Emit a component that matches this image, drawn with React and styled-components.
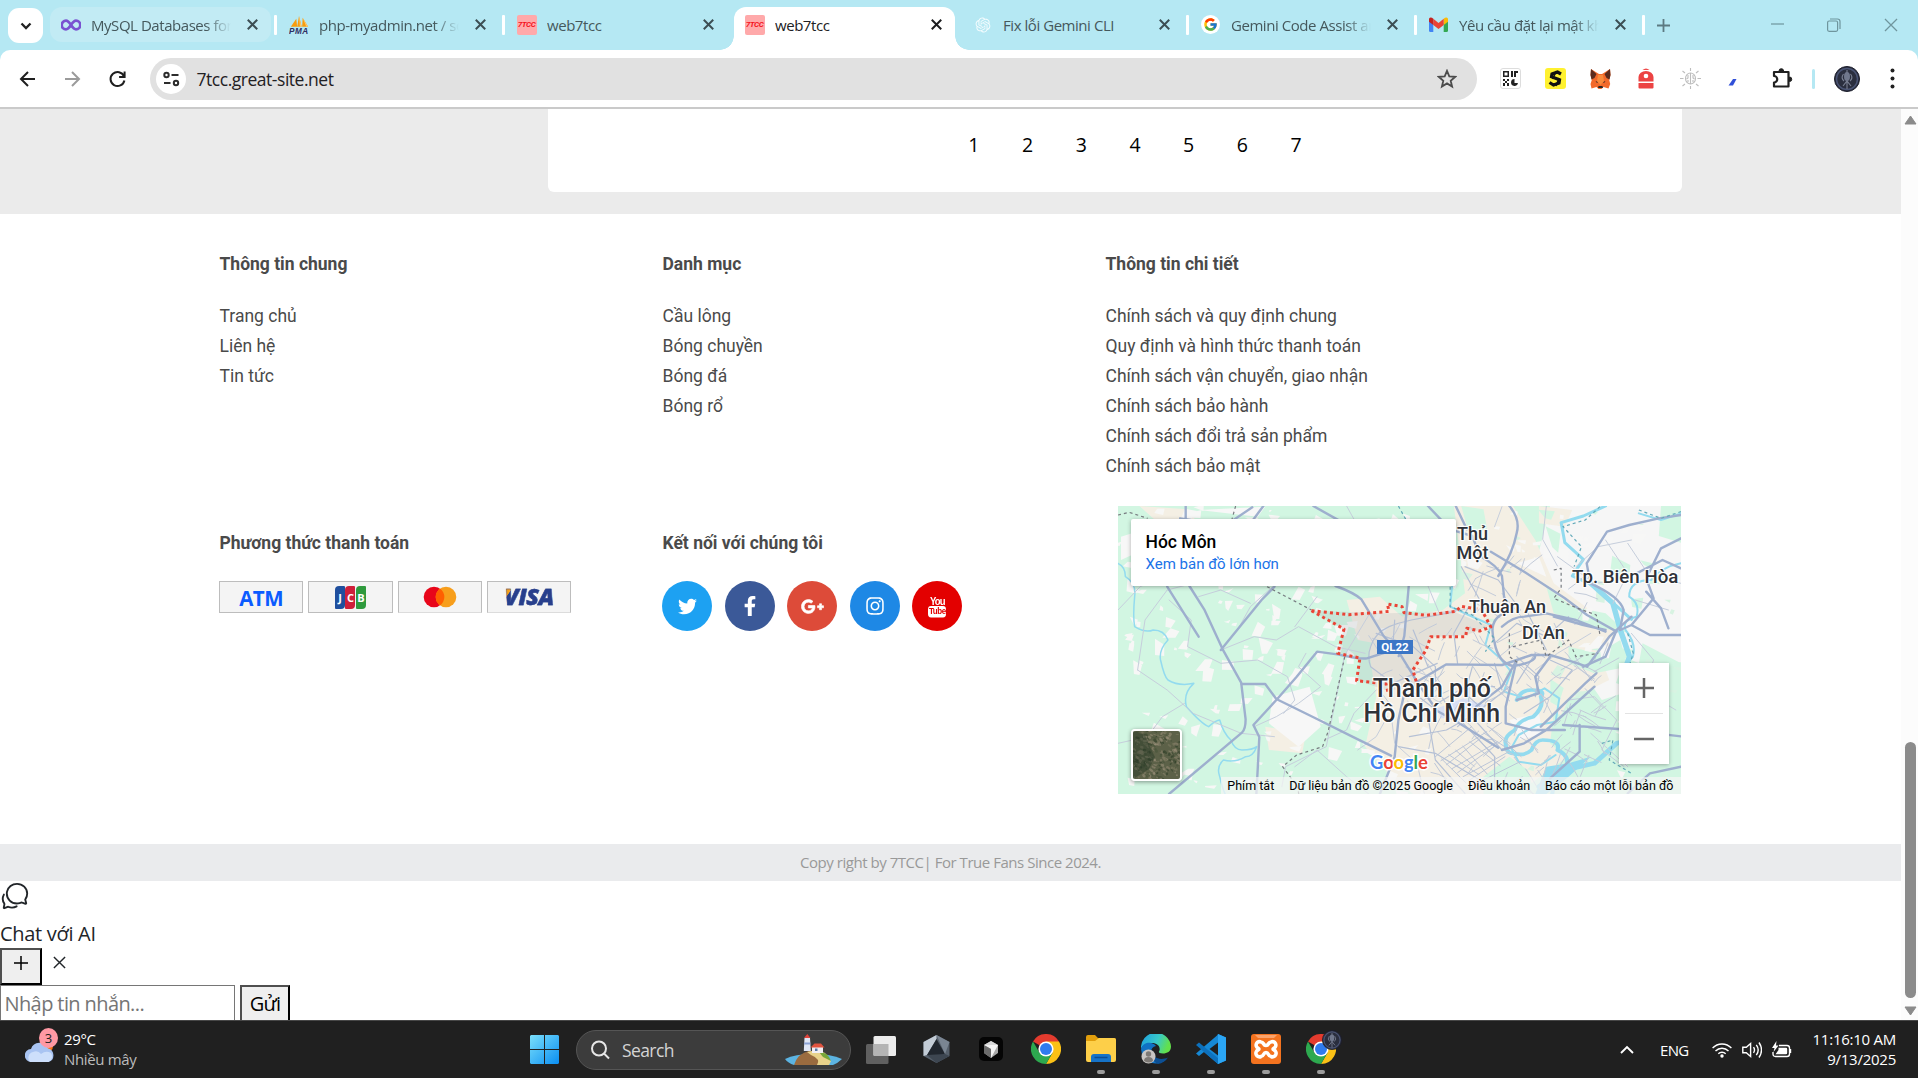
import React from 'react';
import styled, { createGlobalStyle } from 'styled-components';
import { FaTwitter, FaFacebookF, FaGooglePlusG, FaInstagram } from 'react-icons/fa';
import { FcGoogle } from 'react-icons/fc';
import { RiOpenaiFill } from 'react-icons/ri';
import { IoChatbubblesOutline } from 'react-icons/io5';

const ui = '"Segoe UI", "Open Sans", "Noto Sans", sans-serif';
const rb = 'Roboto, "Noto Sans", sans-serif';

const Global = createGlobalStyle`
  *, *::before, *::after { box-sizing: border-box; }
  html, body { margin: 0; padding: 0; }
  body { width: 1918px; height: 1078px; overflow: hidden; background: #fff; font-family: ${ui}; color: #212529; }
  svg { display: block; flex: none; }
`;

const Screen = styled.div`
  width: 1918px;
  height: 1078px;
  display: flex;
  flex-direction: column;
  overflow: hidden;
`;

/* ---------- browser tabs ---------- */
const TabStrip = styled.div`
  height: 50px;
  flex: none;
  background: #b5e8f3;
  display: flex;
  align-items: flex-start;
  padding: 7px 0 0 8px;
`;
const TabSearch = styled.div`
  width: 35px;
  height: 35px;
  margin: 1px 7px 0 0;
  border-radius: 11px;
  background: #fff;
  display: grid;
  place-items: center;
`;
const Tab = styled.div`
  position: relative;
  width: 221px;
  margin-right: 7px;
  height: ${(p) => (p.$active ? 43 : 35)}px;
  padding: 0 13.5px 0 10.5px;
  border-radius: ${(p) => (p.$active ? '12px 12px 0 0' : '12px')};
  background: ${(p) => (p.$active ? '#fff' : p.$hover ? '#c2ebf4' : 'transparent')};
  display: flex;
  align-items: flex-start;
  flex: none;
  &::before, &::after {
    content: ${(p) => (p.$active ? '""' : 'none')};
    position: absolute;
    bottom: 0;
    width: 14px;
    height: 14px;
  }
  &::before { left: -14px; background: radial-gradient(circle at 0 0, transparent 13.5px, #fff 14px); }
  &::after { right: -14px; background: radial-gradient(circle at 100% 0, transparent 13.5px, #fff 14px); }
`;
const TabIcon = styled.div`
  width: 20px;
  height: 35px;
  display: grid;
  place-items: center;
  flex: none;
`;
const TabTitle = styled.div`
  width: 140px;
  margin-left: 10.5px;
  height: 35px;
  line-height: 36px;
  font-size: 15px;
  letter-spacing: -0.45px;
  white-space: nowrap;
  overflow: hidden;
  color: ${(p) => (p.$active ? '#202124' : '#45585c')};
  ${(p) => p.$fade && '-webkit-mask-image: linear-gradient(90deg, #000 82%, transparent 100%);'}
`;
const TabClose = styled.div`
  height: 35px;
  margin-left: auto;
  display: grid;
  place-items: center;
  color: ${(p) => (p.$active ? '#1b1c1e' : '#3c4e53')};
`;
const TabDivider = styled.i`
  position: absolute;
  right: -6px;
  top: 7.5px;
  width: 3px;
  height: 20px;
  border-radius: 1px;
  background: #fff;
`;
const SiteBadge = styled.div`
  width: 20px;
  height: 20px;
  border-radius: 2px;
  background: #ffa9aa;
  color: #f5121c;
  font: italic 700 8px/20px Roboto, sans-serif;
  letter-spacing: -0.4px;
  text-align: center;
`;
const GoogleDot = styled.div`
  width: 19px;
  height: 19px;
  border-radius: 50%;
  background: #fff;
  display: grid;
  place-items: center;
`;
const NewTab = styled.div`
  height: 36px;
  margin-left: 11px;
  display: grid;
  place-items: center;
`;
const WindowButtons = styled.div`
  margin-left: auto;
  height: 35px;
  padding-right: 20px;
  display: flex;
  align-items: center;
  gap: 43px;
  color: #6f959d;
`;

/* ---------- toolbar ---------- */
const ToolbarBack = styled.div`
  height: 59px;
  flex: none;
  background: #b5e8f3;
`;
const Toolbar = styled.div`
  height: 59px;
  background: #fff;
  border-bottom: 2px solid #cacaca;
  border-radius: 10px 10px 0 0;
  display: flex;
  align-items: center;
  padding: 0 4px 0 17px;
`;
const NavButtons = styled.div`
  width: 133px;
  flex: none;
  display: flex;
  gap: 24px;
`;
const AddressBar = styled.div`
  width: 1327px;
  height: 42px;
  flex: none;
  border-radius: 21px;
  background: #e1e1e1;
  display: flex;
  align-items: center;
  padding: 0 20px 0 6px;
`;
const SiteInfo = styled.div`
  width: 30px;
  height: 30px;
  border-radius: 50%;
  background: #fff;
  display: grid;
  place-items: center;
  margin-right: 10.5px;
`;
const Url = styled.div`
  flex: 1;
  font-size: 17.5px;
  letter-spacing: -0.47px;
  color: #1f2023;
`;
const Extensions = styled.div`
  margin-left: 22px;
  display: flex;
  align-items: center;
  flex: 1;
`;
const ExtSlot = styled.div`
  width: ${(p) => p.$w || 45}px;
  height: 26px;
  flex: none;
  display: grid;
  place-items: center;
`;
const QrTile = styled.div`
  width: 21px;
  height: 21px;
  border: 1px solid #ddd;
  border-radius: 3px;
  background: #fff;
  display: grid;
  place-items: center;
`;
const YellowTile = styled.div`
  width: 21px;
  height: 21px;
  border-radius: 3px;
  background: #fff130;
  display: grid;
  place-items: center;
`;
const ToolbarRule = styled.i`
  width: 3px;
  height: 20px;
  border-radius: 2px;
  background: #b5e8f3;
`;

/* ---------- page ---------- */
const Viewport = styled.div`
  height: 911px;
  flex: none;
  display: flex;
`;
const Page = styled.div`
  width: 1901px;
  display: flex;
  flex-direction: column;
`;
const ProductBand = styled.div`
  height: 105px;
  flex: none;
  background: #ebebeb;
  padding: 0 219px 22px 548px;
`;
const Pagination = styled.div`
  height: 83px;
  background: #fff;
  border-radius: 0 0 6px 6px;
  display: flex;
  justify-content: center;
  padding: 20px 0 0 40px;
`;
const PageNumber = styled.a`
  width: 53.7px;
  height: 32px;
  line-height: 32px;
  text-align: center;
  font-size: 19.5px;
  color: #000;
`;
const Footer = styled.footer`
  height: 630px;
  flex: none;
  padding: 35px 0 0 219.5px;
  display: grid;
  grid-template-columns: 443px 443px 580px;
  grid-template-rows: 257px 1fr;
  font-family: ${rb};
  color: #444;
`;
const Column = styled.div`
  padding-top: ${(p) => p.$top || 0}px;
`;
const Heading = styled.h3`
  margin: 0;
  height: 28px;
  line-height: 28px;
  font-size: 17.5px;
  font-weight: 700;
  color: #4a4a4a;
`;
const LinkList = styled.ul`
  list-style: none;
  margin: 23px 0 0;
  padding: 0;
`;
const LinkItem = styled.li`
  height: 30px;
  line-height: 31px;
  font-size: 17.5px;
  color: #4a4a4a;
  white-space: nowrap;
`;
const Payments = styled.div`
  display: flex;
  gap: 5.2px;
  margin: 24px 0 0 -0.5px;
`;
const PayCard = styled.div`
  width: 84.2px;
  height: 32px;
  border: 1px solid #bdbdbd;
  border-bottom-color: ${(p) => (p.$soft ? '#dcdcdc' : '#bdbdbd')};
  background: #f4f4f4;
  display: grid;
  place-items: center;
`;
const AtmWord = styled.span`
  font: 700 20.5px/30px "Open Sans", sans-serif;
  letter-spacing: -0.6px;
  color: #0b5bff;
  padding-top: 1px;
`;
const JcbBars = styled.div`
  display: flex;
  gap: 0.5px;
`;
const JcbBar = styled.span`
  width: 10px;
  height: 23px;
  border-radius: 4px 1px 4px 1px;
  background: ${(p) => p.$c};
  color: #fff;
  font: 700 11px/23px "Open Sans", sans-serif;
  text-align: center;
`;
const VisaWord = styled.span`
  font: italic 800 23px/30px "Open Sans", sans-serif;
  letter-spacing: -0.3px;
  color: transparent;
  background: linear-gradient(125deg, #f7a01d 19%, #273f8c 20%);
  -webkit-background-clip: text;
  background-clip: text;
  -webkit-text-stroke: 0.4px #273f8c;
  padding: 0 2px;
  margin-top: -2px;
`;
const Socials = styled.div`
  display: flex;
  gap: 12.6px;
  margin: 24px 0 0 -0.5px;
`;
const SocialLink = styled.a`
  width: 50px;
  height: 50px;
  border-radius: 50%;
  background: ${(p) => p.$c};
  color: #fff;
  display: grid;
  place-items: center;
`;
const YouTube = styled.span`
  display: flex;
  flex-direction: column;
  align-items: center;
  font: 700 9.5px/9px "Liberation Sans Narrow", "Liberation Sans", sans-serif;
  letter-spacing: -0.8px;
  transform: scaleY(1.15);
`;
const Tube = styled.b`
  width: 18px;
  height: 10px;
  line-height: 10px;
  font-size: 8px;
  letter-spacing: -0.4px;
  background: #fff;
  color: #e30000;
  border-radius: 3px;
  text-align: center;
`;

/* ---------- map ---------- */
const MapFrame = styled.div`
  position: relative;
  width: 563px;
  height: 288px;
  margin-left: 12.5px;
  overflow: hidden;
  background: #d2f5e1;
`;
const PlaceLabel = styled.span`
  position: absolute;
  left: ${(p) => p.$x}px;
  top: ${(p) => p.$y}px;
  font-size: ${(p) => p.$size || 18}px;
  line-height: ${(p) => p.$lh || 19}px;
  font-weight: 500;
  color: #2f3238;
  text-align: center;
  white-space: nowrap;
  text-shadow: 0 0 2px #fff, 1px 1px 1px #fff, -1px -1px 1px #fff, 1px -1px 1px #fff, -1px 1px 1px #fff;
`;
const RoadBadge = styled.span`
  position: absolute;
  left: 259px;
  top: 134px;
  width: 36px;
  height: 14px;
  background: #3b76c6;
  color: #fff;
  font: 700 11.5px/15px Roboto, sans-serif;
  text-align: center;
`;
const PlaceCard = styled.div`
  position: absolute;
  left: 13px;
  top: 13px;
  width: 325px;
  height: 67px;
  padding: 12px 14.5px;
  border-radius: 2px;
  background: #fff;
  box-shadow: 0 1px 4px rgba(0, 0, 0, 0.3);
`;
const PlaceName = styled.div`
  font-size: 17.5px;
  font-weight: 500;
  line-height: 22px;
  color: #000;
`;
const PlaceLink = styled.a`
  display: block;
  font-size: 15px;
  line-height: 22px;
  color: #1a73e8;
`;
const Satellite = styled.div`
  position: absolute;
  left: 13px;
  top: 223px;
  width: 51px;
  height: 52px;
  border: 2px solid #fff;
  border-radius: 4px;
  overflow: hidden;
  box-shadow: 0 1px 4px rgba(0, 0, 0, 0.4);
`;
const ZoomBox = styled.div`
  position: absolute;
  right: 12px;
  top: 157px;
  width: 50px;
  height: 101px;
  background: #fff;
  box-shadow: 0 1px 4px rgba(0, 0, 0, 0.3);
  display: flex;
  flex-direction: column;
`;
const ZoomKey = styled.div`
  flex: 1;
  margin: 0 6px;
  display: grid;
  place-items: center;
  & + & { border-top: 1px solid #e3e3e3; }
`;
const GoogleWord = styled.div`
  position: absolute;
  left: 252px;
  top: 243.5px;
  font: 700 18.5px/24px Lato, sans-serif;
  letter-spacing: -0.2px;
  -webkit-text-stroke: 3px #fff;
  paint-order: stroke fill;
`;
const Letter = styled.span`
  color: ${(p) => p.$c};
`;
const MapTerms = styled.div`
  position: absolute;
  right: 0;
  bottom: 0;
  height: 17px;
  padding: 0 7.5px 0 6px;
  background: rgba(245, 245, 245, 0.72);
  display: flex;
  gap: 15px;
  font-size: 12.5px;
  line-height: 18px;
  color: #000;
  white-space: nowrap;
`;

/* ---------- lower page ---------- */
const Copyright = styled.div`
  height: 37px;
  flex: none;
  background: #eaebed;
  color: #999;
  font-size: 15px;
  line-height: 37px;
  letter-spacing: -0.47px;
  text-align: center;
`;
const ChatArea = styled.div`
  height: 139px;
  overflow: hidden;
`;
const ChatToggle = styled.div`
  height: 37px;
`;
const ChatTitle = styled.div`
  height: 30px;
  line-height: 31px;
  font-size: 20px;
  letter-spacing: -0.3px;
`;
const ChatRow = styled.div`
  height: 37px;
  display: flex;
  align-items: flex-start;
`;
const OldButton = styled.button`
  width: ${(p) => p.$w}px;
  height: 37px;
  padding: 0;
  border: 2px solid;
  border-color: #4f4f4f #000 #000 #4f4f4f;
  border-radius: 0;
  background: #efefef;
  color: #000;
  font: 400 20px/30px ${ui};
  letter-spacing: -0.8px;
  display: grid;
  place-items: center;
`;
const CloseChat = styled.div`
  margin: 8px 0 0 11px;
`;
const MessageInput = styled.input`
  width: 235px;
  height: 37px;
  margin-right: 5px;
  padding: 0 3.5px;
  border: 1.5px solid #767676;
  border-radius: 0;
  background: #fff;
  font: 400 20px/30px ${ui};
  letter-spacing: -0.6px;
  &::placeholder { color: #757575; }
`;
const Scrollbar = styled.div`
  width: 17px;
  background: #fcfcfc;
  display: flex;
  flex-direction: column;
  align-items: center;
  padding: 6px 0 4px 1px;
`;
const Thumb = styled.div`
  width: 11px;
  height: 256px;
  margin: auto 0 8px;
  border-radius: 6px;
  background: #8b8b8b;
`;

/* ---------- taskbar ---------- */
const Taskbar = styled.div`
  height: 58px;
  flex: none;
  background: #202020;
  border-top: 1px solid #474747;
  display: flex;
  align-items: center;
  color: #fff;
`;
const Weather = styled.div`
  position: relative;
  width: 530px;
  height: 57px;
  padding: 6px 0 0 25px;
  display: flex;
`;
const WeatherBadge = styled.span`
  position: absolute;
  left: 39px;
  top: 7px;
  width: 19px;
  height: 20px;
  border-radius: 50%;
  background: #ff99a4;
  color: #222;
  font-size: 13px;
  line-height: 20px;
  text-align: center;
`;
const WeatherText = styled.div`
  margin-left: 9px;
  font-size: 15px;
  line-height: 20px;
  letter-spacing: -0.35px;
  padding-top: 2px;
`;
const Dim = styled.div`
  color: #bcbcbc;
`;
const SearchBox = styled.div`
  width: 275px;
  height: 40px;
  margin: 0 15px 0 17px;
  border: 1px solid #555;
  border-radius: 20px;
  background: #3c3c3c;
  display: flex;
  align-items: center;
  padding: 0 8px 0 14px;
`;
const SearchWord = styled.span`
  flex: 1;
  margin-left: 12px;
  font-size: 17.5px;
  letter-spacing: -0.6px;
  color: #d4d4d4;
`;
const PinnedApps = styled.div`
  display: flex;
  margin-left: 12.5px;
`;
const AppSlot = styled.div`
  position: relative;
  width: 55px;
  height: 57px;
  display: grid;
  place-items: center;
  padding-bottom: 2px;
  &::after {
    content: ${(p) => (p.$running ? '""' : 'none')};
    position: absolute;
    left: 23.5px;
    bottom: 4px;
    width: 8px;
    height: 4px;
    border-radius: 2px;
    background: #9c9c9c;
  }
`;
const Profile = styled.div`
  position: absolute;
  right: 7px;
  top: 9px;
`;
const Tray = styled.div`
  margin-left: auto;
  padding-right: 22px;
  display: flex;
  align-items: center;
`;
const Lang = styled.span`
  margin: 0 23px 0 26px;
  width: 29px;
  font-size: 15px;
  letter-spacing: -0.7px;
`;
const TrayIcons = styled.div`
  width: 81px;
  display: flex;
  align-items: center;
  gap: 10px;
`;
const Clock = styled.div`
  width: 103px;
  font-size: 15px;
  line-height: 20px;
  letter-spacing: -0.25px;
  padding-bottom: 1px;
  text-align: right;
`;

/* ---------- drawings ---------- */
const Cross = ({ s = 11, w = 2 }) => (
  <svg width={s} height={s} viewBox="0 0 10 10" stroke="currentColor" strokeWidth={w}><path d="M.7.7l8.6 8.6M9.3.7L.7 9.3" /></svg>
);
const InfinityMark = () => (
  <svg width="20" height="12" viewBox="0 0 20 12" fill="none" stroke="#7a52d1" strokeWidth="2.7">
    <path d="M10 6C8 3 6.800 1.700 5 1.700a4.300 4.300 0 0 0 0 8.600C6.800 10.300 8 9 10 6s3.200-4.300 5-4.300a4.300 4.300 0 0 1 0 8.600C13.200 10.300 12 9 10 6z" />
  </svg>
);
const PmaBoat = () => (
  <svg width="20" height="20" viewBox="0 0 22 20">
    <path d="M2 12L8 3l1 9zM9 12L11 0l3 12zM14.500 12L15 2l6 10z" fill="#f89c0e" />
    <path d="M11 0l3 12h-2zM15 2l6 10h-2z" fill="#ffc56b" />
    <text x="0" y="19.500" fontFamily="Liberation Sans" fontWeight="700" fontStyle="italic" fontSize="9" fill="#2e2f63" textLength="21">PMA</text>
  </svg>
);
const Gmail = () => (
  <svg width="19" height="15" viewBox="0 0 19 15">
    <path d="M0 3v10.500Q0 15 1.400 15H4.300V6z" fill="#4285f4" />
    <path d="M19 3v10.500Q19 15 17.600 15h-2.900V6z" fill="#34a853" />
    <path d="M14.700 8V1.800L16 .8Q18-.3 19 1.800v3z" fill="#fbbc04" />
    <path d="M4.300 8V1.800L9.500 5.900l5.200-4.100V8L9.500 12z" fill="#ea4335" />
    <path d="M4.300 8V1.800L3 .8Q1-.3 0 1.800v3z" fill="#c5221f" />
  </svg>
);
const Arrow = ({ flip, c }) => (
  <svg width="21" height="20" viewBox="0 0 21 20" fill="none" stroke={c} strokeWidth="2" transform={flip ? 'scale(-1 1)' : undefined}>
    <path d="M18 10H4M11 3l-7 7 7 7" />
  </svg>
);
const Reload = () => (
  <svg width="21" height="20" viewBox="0 0 21 20" fill="none" stroke="#1f1f1f" strokeWidth="2">
    <path d="M17 7.300A7 7 0 1 0 17.400 11.500M17.600 2.500V8h-5.500" />
  </svg>
);
const TuneIcon = () => (
  <svg width="17" height="16" viewBox="0 0 17 16" fill="none" stroke="#2c2c2c" strokeWidth="2">
    <circle cx="3.500" cy="4" r="2.200" /><path d="M8.500 4H15.500M1 12h6.500" /><circle cx="13" cy="12" r="2.200" />
  </svg>
);
const Star = () => (
  <svg width="20" height="20" viewBox="0 0 20 20" fill="none" stroke="#4c4c4c" strokeWidth="1.800">
    <path d="M10 1.800l2.300 5.500 5.900.5-4.500 3.900 1.400 5.800L10 14.400 4.900 17.500l1.400-5.800L1.800 7.800l5.900-.5z" />
  </svg>
);
const Qr = () => (
  <svg width="15" height="15" viewBox="0 0 15 15" fill="#222">
    <path d="M0 0h6v6H0zM1.500 1.500v3h3v-3zM8 0h2v6H8zM11 0h4v2h-2v4h-2zM0 8h2v2H0zM4 8h2v2H4zM2 10h2v2H2zM0 12h2v3H0zM4 12h2v3H4z" fillRule="evenodd" />
    <path d="M11.500 8a3.500 3.500 0 1 0 3.500 4h-3.500z" />
  </svg>
);
const Monogram = () => (
  <svg width="15" height="17" viewBox="0 0 15 17" fill="none" stroke="#111">
    <path d="M13 4L9.500 2 4 4 3.500 6.800 11.500 9.800 11 13 5.500 15 1.500 12.500" strokeWidth="3.200" /><path d="M8.500 1L4.500 9M11 8L8 16" strokeWidth="1.400" />
  </svg>
);
const Fox = () => (
  <svg width="21" height="20" viewBox="0 0 21 20">
    <path d="M1 0l8 5h3l8-5 .5 6-1.300 5 1 4-1.700 4.500-5-1.500-2 2h-3l-2-2-5 1.500L.5 15l1.300-4L.5 6z" fill="#f2692a" />
    <path d="M1 0l5.500 5-2 4-3 1.500L.5 6zM20 0l-5.500 5 2 4 3 1.500 1-4.500z" fill="#5b2b1d" />
    <path d="M5.500 12l2.500 1-1 1zM15.500 12L13 13l1 1zM8.500 17h4l.5 2h-5z" fill="#2b2524" />
    <path d="M8 6h5l1 6-3.500 4L7 12z" fill="#f98b3c" />
  </svg>
);
const RedBell = () => (
  <svg width="16" height="21" viewBox="0 0 16 21">
    <path d="M4.500 2Q8-1 11.500 2z" fill="#ef4b4b" /><path d="M.5 13.500V9a7.500 6 0 0 1 15 0v4.500zM.5 15h15v4.500q0 1-1 1h-13q-1 0-1-1z" fill="#ec4343" />
    <circle cx="8" cy="8" r="2.300" fill="#fff" />
  </svg>
);
const Burst = () => (
  <svg width="21" height="21" viewBox="0 0 21 21" fill="none" stroke="#bdbdbd" strokeWidth="1.100">
    <ellipse cx="10.500" cy="10.500" rx="5" ry="5.500" /><path d="M10.500 5v11M8 7v3l-1.500 1M13 7v3l1.500 1M8 14v-2M13 14v-2" />
    <path d="M10.500 0v3M10.500 18v3M0 10.500h3.500M17.500 10.500H21M2.500 3l2.500 2M18.500 3L16 5M2.500 18L5 16M18.500 18L16 16" />
  </svg>
);
const Puzzle = () => (
  <svg width="23" height="23" viewBox="0 0 23 23" fill="none" stroke="#202020" strokeWidth="2.200" strokeLinejoin="round">
    <path d="M3 5h14.500v14.500H3V15.500a3.200 3.200 0 0 0 0-6.500z" /><path d="M8 4a2.300 2.300 0 0 1 4.600 0zM18.500 10a2.200 2.200 0 0 1 0 4.500z" fill="#202020" strokeWidth="1" />
  </svg>
);
const Avatar = ({ s }) => (
  <svg width={s} height={s} viewBox="0 0 26 26" fill="none">
    <circle cx="13" cy="13" r="12.500" fill="#2a2e3e" stroke="#1b1d2b" /><circle cx="13" cy="13" r="10.500" stroke="#4a5474" strokeWidth="1.500" />
    <path d="M13 4v19M9.500 8q-3 4 .5 7M16.500 8q3 4-.5 7M9 20l4-5 4 5" stroke="#7a8093" strokeWidth="1.100" /><ellipse cx="13" cy="10.500" rx="3" ry="4.500" fill="#70778c" />
  </svg>
);

const rand = (seed) => () => {
  seed = (seed * 16807) % 2147483647;
  return seed / 2147483647;
};
const inCity = (x, y) =>
  (x > 960 && x < 1260 && y > 190 && y < 500) || (x > 860 && x < 1360 && y > 470 && y < 870) || (x > 700 && x < 1000 && y > 400 && y < 620);
const scatter = (seed, n, size, test) => {
  const r = rand(seed);
  let d = '';
  for (let i = 0; i < n; i += 1) {
    const x = 22 + r() * 1522;
    const y = 18 + r() * 864;
    const s = size * (0.4 + r());
    if (test(x, y)) {
      d += `M${x | 0} ${y | 0}l${(s * (0.5 + r())) | 0} ${(s * (r() - 0.3)) | 0} ${(-s * r() * 0.6) | 0} ${(s * (0.4 + r())) | 0} ${(-s * (0.3 + r())) | 0} ${(-s * r() * 0.4) | 0}z`;
    }
  }
  return d;
};
const whitePatches = scatter(77, 380, 22, (x, y) => !inCity(x, y) && x < 1420);
const greenPatches = scatter(31, 90, 42, (x, y) => x > 1120 && y < 540);
const greenBits = scatter(941, 60, 18, (x) => x > 900);
const streets = (() => {
  const r = rand(4242);
  let d = '';
  for (let i = 0; i < 190; i += 1) {
    const x = 690 + r() * 640;
    const y = 180 + r() * 700;
    if (inCity(x, y)) {
      const a = (i % 2 ? -0.9 : 0.7) + (r() - 0.5) * 0.9;
      const l = 22 + r() * 62;
      d += `M${x | 0} ${y | 0}q${(Math.cos(a) * l * 0.5) | 0} ${(Math.sin(a) * l * 0.5 + (r() - 0.5) * 16) | 0} ${(Math.cos(a) * l) | 0} ${(Math.sin(a) * l) | 0}`;
    }
  }
  return d;
})();
const denseBlock = (() => {
  let d = '';
  for (let i = 0; i < 9; i += 1) d += `M${878 + i * 19} ${790 - i * 13}l${50 + (i % 3) * 16} ${84 - (i % 4) * 12}`;
  for (let i = 0; i < 8; i += 1) d += `M${880 + i * 15} ${770 + i * 12}l${98 + (i % 2) * 26} ${-90 + i * 3}`;
  return d;
})();

const MapArt = () => (
  <svg width="563" height="288" viewBox="22 18 1522 864" preserveAspectRatio="none" fill="none" strokeLinejoin="round" strokeLinecap="round">
    <path d="M22 18H1544V882H22z" fill="#d2f6e2" />
    <path d="M1190 18H1544V640L1440 560 1330 600 1250 470 1200 380 1100 300 1150 200z" fill="#f6f6f6" />
    <path d="M930 18L1090 18 1150 120 1200 250 1310 340 1370 400 1330 480 1350 540 1240 600 1200 690 1250 760 1140 850 1080 882 820 882 760 830 690 740 720 590 700 450 730 360 900 330 960 280z" fill="#f4efe4" />
    <path d="M640 300l90-10 60 60-20 90-100-20zM420 680l110 20-10 60-90-10zM80 18l130 10 20 30-90 20zM1160 18l90 12-20 50-70-10z" fill="#f4efe4" />
    <path d="M440 590l100-30 30 120-60 60-80-70zM240 30l180-10-20 30zM1100 190l60-20 20 60zM1080 660l80-20 10 60-60 20zM30 110l30-10 10 60-40 20z" fill="#f7f7f7" />
    <path d="M1180 260l70 60 90 20 60 60-90-20-110-40zM1240 440l80 20 60-40 20 80-90 20-70-30zM1440 430l104 60v200l-70 60-60-160zM1010 830l70-60 50 40 20 80h-140zM950 18l60 10 10 60-50 10zM1200 640l80 20 60 90-90 40-60-60zM1490 18h54v110l-60-20zM1200 800l130 20 20 60h-160z" fill="#d2f6e2" />
    <path d={whitePatches} fill="#f7f7f6" />
    <path d={greenPatches} fill="#d2f6e2" />
    <path d={greenBits} fill="#d8f3e2" />
    <path d="M545 332L750 340 930 335 1025 378 965 405 870 412 818 520 830 560 750 572 668 540 676 474 616 462 632 388z" fill="#7c8a98" fillOpacity=".14" />
    <path d="M885 625l70-30 60 20-20 35-100 5z" fill="#d8dff4" />

    <g stroke="#93dbef" strokeWidth="1.500">
      <path d="M22 190q20 10 20 40 30 20 25 60-5 60 0 90 30 20 50 10 30 0 40 30-25 30-20 60 10 50 20 60 30 20 70 10-30 30-20 70 40 50 60 60 20-20 30-20 10 40 30 60 10 30 30 30 30 0 40-10-10 30-30 30-30 20-60 10-20 20-10 50 10 50 20 60 10 30 20 60" vectorEffect="non-scaling-stroke" />
      <path d="M925 260l-5 60 50 25 60 30-15 60 40 40 30 40-20 60 60 20 50-30 40 30-10 70-50 10-50 30-20 40 20 40 60 10 40-30" vectorEffect="non-scaling-stroke" strokeWidth="2" />
      <path d="M1340 18l-60 30-60 20 10 60 50 50-30 50 60 30 40 40 60 60" vectorEffect="non-scaling-stroke" strokeWidth="3" />
      <path d="M1544 190q-50 10-80 50-60 0-60 50 30 20 20 60-40 10-30 40 30 40 20 80-20 20-20 50M1430 40l60 20 54-20" vectorEffect="non-scaling-stroke" strokeWidth="2" />
    </g>
    <g stroke="#93dbef">
      <path d="M1300 250l60 60 20 80 25 80-20 60" strokeWidth="15" />
      <path d="M1100 600q10-30 40-30 40 0 25 20 10 30-20 60-40 10-50 40-30 20-25 40 0 30 20 30 30 10 50-10 10-30 30-30 50 0 40 30 40 20 20 60-30 20-30 50-10 40 0 60" strokeWidth="11" />
      <path d="M1160 860l70-50 80-20 60-60 40-10" strokeWidth="14" />
    </g>
    <path d="M1180 800l60-10 60-20-60 60-60 52h-30z" fill="#93dbef" />

    <g stroke="#c6cedc" strokeWidth="1">
      <path d="M22 330l60-70 60-30 50-60M75 510l20-150 60-90 70-20M75 510l80 60 70 70 130 60 90 10M160 300l60 60-10 80 90 50 100-10 80 50 20 70-30 40M300 450l90-40 60 10 60-40 100 60 80 20M390 680l60-30 60-40 60-50-60-60 20-40M580 720l60-30 20-50 60-70M500 800l60-50 80 80 60 52M22 730l80-20 40-60 60-40M240 290l60-20 80 40M440 260l-60 60-30 60M640 18l20 40M560 290l-60 90" vectorEffect="non-scaling-stroke" />
      <path d="M700 345l-65 120-50 275-110 60-10 60M860 258l30 80 70-10M1180 18l-10 100 40 80M1060 20l-20 60M1260 200l60-60 90-20M1210 170l100 80 70-10M1400 130l60 100 84 20M1340 120l60 100-40 90M1420 300l90 30M1300 400l-90 60-60 50M1240 600l70-10 60 70-40 90 60 50M1300 700l100 100M1410 400l60 80-30 90 90 60M750 650l-30 60-50 40M760 640l10 90 60 60 20 90M1060 280l60 80 90 60" vectorEffect="non-scaling-stroke" />
    </g>
    <path d={streets} stroke="#c3cbd9" strokeWidth="1" vectorEffect="non-scaling-stroke" />
    <path d={denseBlock} stroke="#bcc6d8" strokeWidth="1" vectorEffect="non-scaling-stroke" />
    <g stroke="#b5c0d5" strokeWidth="1.200">
      <path d="M705 500q-10-30 0-60 10-40 50-60 20-10 60-20l120-25M770 360l-5 80M705 500l60 50 120-60M720 400l100 40 60 60 0 60M860 500l-40-110M940 490l-10-90 40-80M1040 490l20 80M800 560l70 60 90-60 80 0M870 540l60 110M980 500l-20 80 40 40M1080 560l-90 80-80 50-100 20M860 650l20 130 80 100M930 640l110 130 0 100M1000 620l-60 60M970 560l0 80 90 110M1100 470l60 60-10 60M1150 460l-50 90M780 740l100 20 120 80M1190 480l60 30-60 80-70 50M1040 430l60-60 80 40 60-60M1130 340l50 110M960 200l90 40 60 90M1000 300l-50-100" vectorEffect="non-scaling-stroke" />
    </g>
    <g stroke="#9eafce" strokeWidth="2.400">
      <path d="M155 260l85 150M215 258l40 70 50 120 50 100 12 110q0 30-10 40L160 882M385 22l-80 60M415 18l-40 60M300 450l110-150 35-40M205 18l0 40M190 55l120 20M355 552l65 0 30 45 110 60 90 50 110 60M450 600l55-70 55-75 55 8q60 15 80 12l70-25M450 600l-62 75 16 36-4 90-4 81M550 18l80 50M610 258q50 20 70 40l60 110 45 55 50 90 50 80 50 30 115 80M808 258l-12 150-15 60M800 560l-20 100-10 110-40 112" vectorEffect="non-scaling-stroke" />
      <path d="M860 18l60 70 60 20 20 60q50 30 60 60l10 110q-50 20-30 90 10 60 50 70 60-10 60-30M1060 380q30-30 60-30l60-10 80 20 80 35M935 18l30 70M1080 18q30 40 20 80-10 60-50 130M830 545l80-52 150 2 80-30 50 0 60 20 40 15 60-90 60-60M1030 155l90 60 110 80 60 50 80 50M1200 350l80 25 60 15M1100 480l-40 80-70 60M1100 480l-30 140 0 50 70 20 90 0M1190 470l-40 60 10 50-60 20M1165 680l120-130 30-30M1060 750l60-20 60-40 60-60 70-70M1225 675l150 12 169 22M1270 675v80l-80 80" vectorEffect="non-scaling-stroke" />
      <path d="M1544 45l-60 10-80 20-60 20-55 95 10 60q80 40 90 80l-10 60M1370 390l-30 80-60 30M1410 375l60-80-20-60 40-90 54-30M1450 275l40 50 20 60M1380 390l30-15 50 30 84 0M1400 880l60-60 84-20M1544 205l-50-25-70 40" vectorEffect="non-scaling-stroke" />
    </g>
    <g stroke="#777b80" strokeWidth="1.200" strokeDasharray="3 3" strokeLinecap="butt">
      <path d="M425 260l120 70M635 470l-45 225-15 45-70 25-38 35 40 60 10 60M22 45l30-8 50 18M340 18l-10 40M1200 210l20-5 0 60-20 30 65 30 50 20 10 60M1080 400l0 70 25 20M1090 440l75-20 15 50 60-50 20 50 60-10" vectorEffect="non-scaling-stroke" />
      <path d="M780 18l20 40M920 260v60l60 25 60 70-25 40M1325 20l-40 40-60 20 50 60-20 60M1430 30l60 25 54-20M1400 400l15 60-20 70M1330 730l30-10-10 60 60 40" stroke="#62a9b8" vectorEffect="non-scaling-stroke" />
    </g>
    <path d="M545 332l100 12 110-10-5-22 40 8 5 18 60 8 80-12 15-15 55 10 25 52-30 12-35-8-3 25-95 0-12 40-36 60 12 45M545 332l88 55-17 73 60 14-9 68 80 10 5 25" stroke="#ea4436" strokeWidth="3" strokeDasharray="3 3.200" strokeLinecap="butt" vectorEffect="non-scaling-stroke" />
  </svg>
);

const Terrain = () => {
  const r = rand(99);
  const blobs = Array.from({ length: 320 }, (_, i) => (
    <ellipse key={i} cx={r() * 47} cy={r() * 48} rx={0.6 + r() * 2} ry={0.4 + r() * 1.2} transform={`rotate(${(r() * 60) | 0} 24 24)`} fill={['#7f7b62', '#2f3d28', '#8f866f', '#48533a', '#99907a'][i % 5]} fillOpacity=".6" />
  ));
  return <svg width="47" height="48" viewBox="0 0 47 48"><path d="M0 0h47v48H0z" fill="#5c6148" />{blobs}<path d="M0 0l12 4 6 14 4 8-6 12-16 10z" fill="#1f3320" fillOpacity=".4" /></svg>;
};

const Cloud = () => (
  <svg width="30" height="35" viewBox="0 0 30 35">
    <circle cx="21" cy="19" r="7" fill="#f97316" />
    <path d="M6.500 35a6.500 6.500 0 0 1-.5-13 9 9 0 0 1 17-.5A7 7 0 0 1 23.500 35z" fill="#a9c4f2" />
    <path d="M5 35a6 6 0 0 1 3-10q5-2 8 2 5-4 10-1a6 6 0 0 1-2.500 9z" fill="#cddffb" />
  </svg>
);
const WinLogo = () => (
  <svg width="29" height="29" viewBox="0 0 29 29">
    <defs><linearGradient id="win" x1="0" y1="0" x2="1" y2="1"><stop offset="0" stopColor="#7be0fb" /><stop offset="1" stopColor="#0a8ef2" /></linearGradient></defs>
    <path d="M1 0h13v14H0V1zM15 0h13l1 1v13H15zM0 15h14v14H1l-1-1zM15 15h14v13l-1 1H15z" fill="url(#win)" />
  </svg>
);
const Lighthouse = () => (
  <svg width="57" height="31" viewBox="0 0 57 31">
    <path d="M0 25q10-5 28-5t29 5q-4 4-9 6H9q-6-2-9-6z" fill="#5cb4e2" />
    <path d="M9 31q4-12 15-14 14 0 18 8l-4 6z" fill="#9a6b3f" /><path d="M22 18q12-3 18 1l6 8-2 4H32q4-6-6-10z" fill="#e8d28a" /><path d="M34 18q9 0 12 9l-8-4z" fill="#78a638" />
    <path d="M19.500 4h5.500l.8 13h-7z" fill="#dfe6f5" /><path d="M19 4L22.300 0l3.200 4z" fill="#e0443c" /><path d="M19.200 8.500h6.100v2h-6.100z" fill="#8ba2d4" />
    <path d="M27 13h11v6H27z" fill="#f1eef3" /><path d="M25.500 13.500l4-4h6.500l3.500 4z" fill="#e0533f" /><path d="M30 14.500h2.500V17H30z" fill="#5b7ba6" />
  </svg>
);
const TaskView = () => (
  <svg width="30" height="28" viewBox="0 0 30 28">
    <rect y="8" width="22.500" height="20" rx="1.500" fill="#606060" /><rect x="7.500" width="22.500" height="20" rx="1.500" fill="#ececec" /><path d="M7.500 8h15v12h-14q-1 0-1-1z" fill="#b4b4b4" />
  </svg>
);
const HexApp = () => (
  <svg width="27" height="28" viewBox="0 0 27 28">
    <path d="M13.500 0L26.500 7v14L13.500 28 .5 21V7z" fill="#56606c" /><path d="M13.500 0L.5 7v14l3.500-1L13.500 4z" fill="#c3ccd6" /><path d="M13.500 4L4 20l9 2 9-3z" fill="#20262e" /><path d="M13.500 0l8.500 19 4.500-12z" fill="#7a8592" /><path d="M4 20l18-1 4.500 2-13 7z" fill="#3d4651" />
  </svg>
);
const CubeApp = () => (
  <svg width="24" height="24" viewBox="0 0 24 24">
    <rect width="24" height="24" rx="5" fill="#050505" /><path d="M12 4l7 4v8l-7 5-7-5V8z" fill="#a8a8a8" /><path d="M5 8l7-4 7 4-7 3z" fill="#d7d7d7" /><path d="M5 8h14l-7 13v-9z" fill="#f2f2f2" /><path d="M5 8l7 4v9l-7-5z" fill="#6b6b6b" />
  </svg>
);
const Chrome = () => (
  <svg width="30" height="30" viewBox="0 0 30 30">
    <path d="M2 7.500A15 15 0 0 1 28 7.500L15 15z" fill="#e33b2e" /><path d="M15 7.500h13A15 15 0 0 1 15 30l6.500-11.200z" fill="#fbc116" /><path d="M2 7.500l6.500 11.300 6.500 3.700L21.500 18.800 15 30A15 15 0 0 1 2 7.500z" fill="#2da94f" />
    <circle cx="15" cy="15" r="7.600" fill="#fff" /><circle cx="15" cy="15" r="6" fill="#2f7bee" />
  </svg>
);
const Folder = () => (
  <svg width="30" height="27" viewBox="0 0 30 27">
    <path d="M0 2q0-2 2-2h7l3 3h16q2 0 2 2v8H0z" fill="#e19e0c" /><path d="M0 6h9l4-3h15q2 0 2 2v20q0 2-2 2H2q-2 0-2-2z" fill="#fdcf49" /><path d="M5 27v-5q0-3 3-3h14q3 0 3 3v5z" fill="#1673c8" /><path d="M8.500 22.500h13" stroke="#0b4c93" strokeWidth="1.500" />
  </svg>
);
const Edge = () => (
  <svg width="30" height="30" viewBox="0 0 30 30">
    <defs><linearGradient id="edg" x1="0" y1="0" x2="1" y2=".3"><stop offset="0" stopColor="#1b9de2" /><stop offset=".6" stopColor="#38c9c9" /><stop offset="1" stopColor="#62e04c" /></linearGradient></defs>
    <path d="M0 15A15 15 0 0 1 30 12.500c0 5-4 7-8 7-5 0-4.500-1.500-3.500-3C19.500 12 16 9 11 9 5 9 1 12 0 15z" fill="url(#edg)" />
    <path d="M0 15c1-4 5-7 10-6 2 .3 4 1.500 5 3-6 1-6 8-2 12 4 4 10 4 14-.5A15 15 0 0 1 0 15z" fill="#1072c4" /><path d="M12 16c-1 8 7 11 15 7.500A15 15 0 0 1 17 30c-5-2-8-8-5-14z" fill="#0c4f93" />
    <circle cx="7.500" cy="22.500" r="7" fill="#c9c6c3" /><circle cx="7.500" cy="20" r="2.700" fill="#7d7975" /><path d="M3 27q0-4 4.500-4t4.500 4q-4 3-9 0z" fill="#7d7975" />
  </svg>
);
const Code = () => (
  <svg width="30" height="30" viewBox="0 0 30 30">
    <path d="M22 0l8 3.500v23L22 30 8 18l-5 4-3-2.500 21-18z" fill="#1689d6" /><path d="M3 8.500l20 16.500L22 30 0 11z" fill="#0d71bd" /><path d="M22 0l8 3.500v23L22 30z" fill="#2ba6f5" /><path d="M22 8.500v13L13.500 15z" fill="#202020" />
  </svg>
);
const Xampp = () => (
  <svg width="30" height="30" viewBox="0 0 30 30" fill="none">
    <rect width="30" height="30" rx="3" fill="#f4731f" /><path d="M4 1h22l-3 3H7z" fill="#fba36b" />
    <path d="M10 8a3 3 0 0 0-3 6q2 1 0 2a3.500 3.500 0 0 0 3 6.500c3 0 2-4 5-4s2 4 5 4a3.500 3.500 0 0 0 3-6.500q-2-1 0-2a3 3 0 0 0-3-6c-3 0-2 3.500-5 3.500S13 8 10 8z" stroke="#fff" strokeWidth="3.600" />
  </svg>
);
const Wifi = () => (
  <svg width="20" height="16" viewBox="0 0 20 16" fill="none" stroke="#fff" strokeWidth="1.400">
    <path d="M.6 6a13 13 0 0 1 18.800 0M3.500 9a9 9 0 0 1 13 0M6.300 11.800a5.200 5.200 0 0 1 7.400 0" /><circle cx="10" cy="14" r="1.700" fill="#fff" stroke="none" />
  </svg>
);
const Volume = () => (
  <svg width="20" height="18" viewBox="0 0 20 18" fill="none" stroke="#fff" strokeWidth="1.400">
    <path d="M.8 6.200h3.500L8.600 2.500v13L4.300 11.800H.8z" /><path d="M11.500 6.200q2 2.800 0 5.600M14.300 3.800q3.800 5.200 0 10.400M17 1.500q5 7.500 0 15" />
  </svg>
);
const Battery = () => (
  <svg width="20" height="18" viewBox="0 0 20 18" fill="none" stroke="#fff" strokeWidth="1.400">
    <path d="M7 4.500h8q2.500 0 2.500 2.500v6q0 2.500-2.500 2.500H3.500Q1 15.500 1 13v-2M18.500 8v4" /><path d="M6.500 6.800H14q1.200 0 1.200 1.200v4q0 1.200-1.200 1.200H3.500L6.500 9z" fill="#fff" stroke="none" /><path d="M4.500 0L0 7h2.500L1.500 11 6.500 4.500H4z" fill="#fff" stroke="none" />
  </svg>
);

const tabs = [
  { title: 'MySQL Databases for', icon: <InfinityMark />, hover: true, rule: true, fade: true },
  { title: 'php-myadmin.net / sq', icon: <PmaBoat />, rule: true, fade: true },
  { title: 'web7tcc', icon: <SiteBadge>7TCC</SiteBadge> },
  { title: 'web7tcc', icon: <SiteBadge>7TCC</SiteBadge>, active: true },
  { title: 'Fix lỗi Gemini CLI', icon: <RiOpenaiFill size={18} color="#f4fcfe" />, rule: true },
  { title: 'Gemini Code Assist an', icon: <GoogleDot><FcGoogle size={15} /></GoogleDot>, rule: true, fade: true },
  { title: 'Yêu cầu đặt lại mật kh', icon: <Gmail />, rule: true, fade: true },
];
const general = ['Trang chủ', 'Liên hệ', 'Tin tức'];
const categories = ['Cầu lông', 'Bóng chuyền', 'Bóng đá', 'Bóng rổ'];
const policies = ['Chính sách và quy định chung', 'Quy định và hình thức thanh toán', 'Chính sách vận chuyển, giao nhận', 'Chính sách bảo hành', 'Chính sách đổi trả sản phẩm', 'Chính sách bảo mật'];
const googleLetters = [['G', '#4285f4'], ['o', '#ea4335'], ['o', '#fbbc04'], ['g', '#4285f4'], ['l', '#34a853'], ['e', '#ea4335']];

const Links = ({ title, items }) => (
  <Column $top={1}>
    <Heading>{title}</Heading>
    <LinkList>{items.map((t) => <LinkItem key={t}>{t}</LinkItem>)}</LinkList>
  </Column>
);

export default function App() {
  return (
    <Screen>
      <Global />
      <TabStrip>
        <TabSearch>
          <svg width="12" height="8" viewBox="0 0 12 8" fill="none" stroke="#222" strokeWidth="2.300"><path d="M1.500 1.500L6 6l4.500-4.500" /></svg>
        </TabSearch>
        {tabs.map((t, i) => (
          <Tab key={i} $active={t.active} $hover={t.hover}>
            <TabIcon>{t.icon}</TabIcon>
            <TabTitle $active={t.active} $fade={t.fade}>{t.title}</TabTitle>
            <TabClose $active={t.active}><Cross s={11} w={1.8} /></TabClose>
            {t.rule ? <TabDivider /> : null}
          </Tab>
        ))}
        <NewTab><svg width="13" height="13" viewBox="0 0 13 13" stroke="#5c7a82" strokeWidth="1.800"><path d="M6.500 0v13M0 6.500h13" /></svg></NewTab>
        <WindowButtons>
          <svg width="13" height="14" viewBox="0 0 13 14" stroke="currentColor" strokeWidth="1.200"><path d="M0 6h13" /></svg>
          <svg width="14" height="14" viewBox="0 0 14 14" fill="none" stroke="currentColor" strokeWidth="1.200"><rect x=".6" y="3" width="10" height="10.300" rx="1.500" /><path d="M3 1h7.500q2.500 0 2.500 2.500V11" /></svg>
          <Cross s={14} w={0.9} />
        </WindowButtons>
      </TabStrip>
      <ToolbarBack>
        <Toolbar>
          <NavButtons><Arrow c="#1f1f1f" /><Arrow c="#9b9b9b" flip /><Reload /></NavButtons>
          <AddressBar>
            <SiteInfo><TuneIcon /></SiteInfo>
            <Url>7tcc.great-site.net</Url>
            <Star />
          </AddressBar>
          <Extensions>
            <ExtSlot $w={23}><QrTile><Qr /></QrTile></ExtSlot>
            <ExtSlot $w={67}><YellowTile><Monogram /></YellowTile></ExtSlot>
            <ExtSlot $w={23}><Fox /></ExtSlot>
            <ExtSlot $w={67}><RedBell /></ExtSlot>
            <ExtSlot $w={23}><Burst /></ExtSlot>
            <ExtSlot $w={61}><svg width="9" height="15" viewBox="0 0 9 15"><path d="M5 8h3.500L5 14.500H.5z" fill="#3150d8" /></svg></ExtSlot>
            <ExtSlot $w={39}><Puzzle /></ExtSlot>
            <ExtSlot $w={22}><ToolbarRule /></ExtSlot>
            <ExtSlot $w={46}><Avatar s={26} /></ExtSlot>
            <ExtSlot $w={44}><svg width="5" height="21" viewBox="0 0 5 21" fill="#202020"><circle cx="2.500" cy="2.500" r="2" /><circle cx="2.500" cy="10.500" r="2" /><circle cx="2.500" cy="18.500" r="2" /></svg></ExtSlot>
          </Extensions>
        </Toolbar>
      </ToolbarBack>
      <Viewport>
        <Page>
          <ProductBand>
            <Pagination>{[1, 2, 3, 4, 5, 6, 7].map((n) => <PageNumber key={n}>{n}</PageNumber>)}</Pagination>
          </ProductBand>
          <Footer>
            <Links title="Thông tin chung" items={general} />
            <Links title="Danh mục" items={categories} />
            <Links title="Thông tin chi tiết" items={policies} />
            <Column $top={23}>
              <Heading>Phương thức thanh toán</Heading>
              <Payments>
                <PayCard><AtmWord>ATM</AtmWord></PayCard>
                <PayCard><JcbBars><JcbBar $c="#1f4f9e">J</JcbBar><JcbBar $c="#cf1f3a">C</JcbBar><JcbBar $c="#2f9a3d">B</JcbBar></JcbBars></PayCard>
                <PayCard $soft>
                  <svg width="34" height="22" viewBox="0 0 34 22"><circle cx="11" cy="11" r="10.300" fill="#e8061a" /><circle cx="23" cy="11" r="10.300" fill="#f79e1b" /><path d="M17 2.600a10.300 10.300 0 0 1 0 16.800 10.300 10.300 0 0 1 0-16.800z" fill="#ff5f00" /></svg>
                </PayCard>
                <PayCard $soft><VisaWord>VISA</VisaWord></PayCard>
              </Payments>
            </Column>
            <Column $top={23}>
              <Heading>Kết nối với chúng tôi</Heading>
              <Socials>
                <SocialLink $c="#1da1f2"><FaTwitter size={19} /></SocialLink>
                <SocialLink $c="#3b5998"><FaFacebookF size={20} /></SocialLink>
                <SocialLink $c="#dd4b39"><FaGooglePlusG size={23} stroke="#fff" strokeWidth="18" /></SocialLink>
                <SocialLink $c="#1e88e5"><FaInstagram size={20} /></SocialLink>
                <SocialLink $c="#e30000"><YouTube>You<Tube>Tube</Tube></YouTube></SocialLink>
              </Socials>
            </Column>
            <MapFrame>
              <MapArt />
              <PlaceLabel $x={338.5} $y={18}>Thủ<br />Một</PlaceLabel>
              <PlaceLabel $x={454} $y={61.5} $size={18.7}>Tp. Biên Hòa</PlaceLabel>
              <PlaceLabel $x={351} $y={91}>Thuận An</PlaceLabel>
              <PlaceLabel $x={404} $y={117}>Dĩ An</PlaceLabel>
              <PlaceLabel $x={245.5} $y={169.5} $size={24.9} $lh={25}>Thành phố<br />Hồ Chí Minh</PlaceLabel>
              <RoadBadge>QL22</RoadBadge>
              <PlaceCard>
                <PlaceName>Hóc Môn</PlaceName>
                <PlaceLink>Xem bản đồ lớn hơn</PlaceLink>
              </PlaceCard>
              <Satellite><Terrain /></Satellite>
              <ZoomBox>
                <ZoomKey><svg width="20" height="20" viewBox="0 0 20 20" stroke="#666" strokeWidth="2.500"><path d="M10 0v20M0 10h20" /></svg></ZoomKey>
                <ZoomKey><svg width="20" height="20" viewBox="0 0 20 20" stroke="#666" strokeWidth="2.500"><path d="M0 10h20" /></svg></ZoomKey>
              </ZoomBox>
              <GoogleWord>{googleLetters.map(([l, c], i) => <Letter key={i} $c={c}>{l}</Letter>)}</GoogleWord>
              <MapTerms><span>Phím tắt</span><span>Dữ liệu bản đồ ©2025 Google</span><span>Điều khoản</span><span>Báo cáo một lỗi bản đồ</span></MapTerms>
            </MapFrame>
          </Footer>
          <Copyright>Copy right by 7TCC| For True Fans Since 2024.</Copyright>
          <ChatArea>
            <ChatToggle><IoChatbubblesOutline size={30} /></ChatToggle>
            <ChatTitle>Chat với AI</ChatTitle>
            <ChatRow>
              <OldButton $w={42}><svg width="14" height="26" viewBox="0 0 14 26" stroke="#000" strokeWidth="1.500"><path d="M7 2v14M0 9h14" /></svg></OldButton>
              <CloseChat><Cross s={13} w={1.1} /></CloseChat>
            </ChatRow>
            <ChatRow>
              <MessageInput placeholder="Nhập tin nhắn..." />
              <OldButton $w={50}>Gửi</OldButton>
            </ChatRow>
          </ChatArea>
        </Page>
        <Scrollbar>
          <svg width="13" height="10" viewBox="0 0 13 10"><path d="M6.500 1L12 9H1z" fill="#8b8b8b" stroke="#8b8b8b" strokeLinejoin="round" /></svg>
          <Thumb />
          <svg width="13" height="10" viewBox="0 0 13 10"><path d="M6.500 9L12 1H1z" fill="#8b8b8b" stroke="#8b8b8b" strokeLinejoin="round" /></svg>
        </Scrollbar>
      </Viewport>
      <Taskbar>
        <Weather>
          <Cloud />
          <WeatherBadge>3</WeatherBadge>
          <WeatherText>29°C<Dim>Nhiều mây</Dim></WeatherText>
        </Weather>
        <WinLogo />
        <SearchBox>
          <svg width="19" height="20" viewBox="0 0 19 20" fill="none" stroke="#e6e6e6" strokeWidth="2"><circle cx="8" cy="8.500" r="7" /><path d="M13 13.500l5 5" /></svg>
          <SearchWord>Search</SearchWord>
          <Lighthouse />
        </SearchBox>
        <TaskView />
        <PinnedApps>
          <AppSlot><HexApp /></AppSlot>
          <AppSlot><CubeApp /></AppSlot>
          <AppSlot><Chrome /></AppSlot>
          <AppSlot $running><Folder /></AppSlot>
          <AppSlot $running><Edge /></AppSlot>
          <AppSlot $running><Code /></AppSlot>
          <AppSlot $running><Xampp /></AppSlot>
          <AppSlot $running><Chrome /><Profile><Avatar s={20} /></Profile></AppSlot>
        </PinnedApps>
        <Tray>
          <svg width="14" height="9" viewBox="0 0 14 9" fill="none" stroke="#fff" strokeWidth="1.900"><path d="M1 8l6-6 6 6" /></svg>
          <Lang>ENG</Lang>
          <TrayIcons><Wifi /><Volume /><Battery /></TrayIcons>
          <Clock>11:16:10 AM<br />9/13/2025</Clock>
        </Tray>
      </Taskbar>
    </Screen>
  );
}
